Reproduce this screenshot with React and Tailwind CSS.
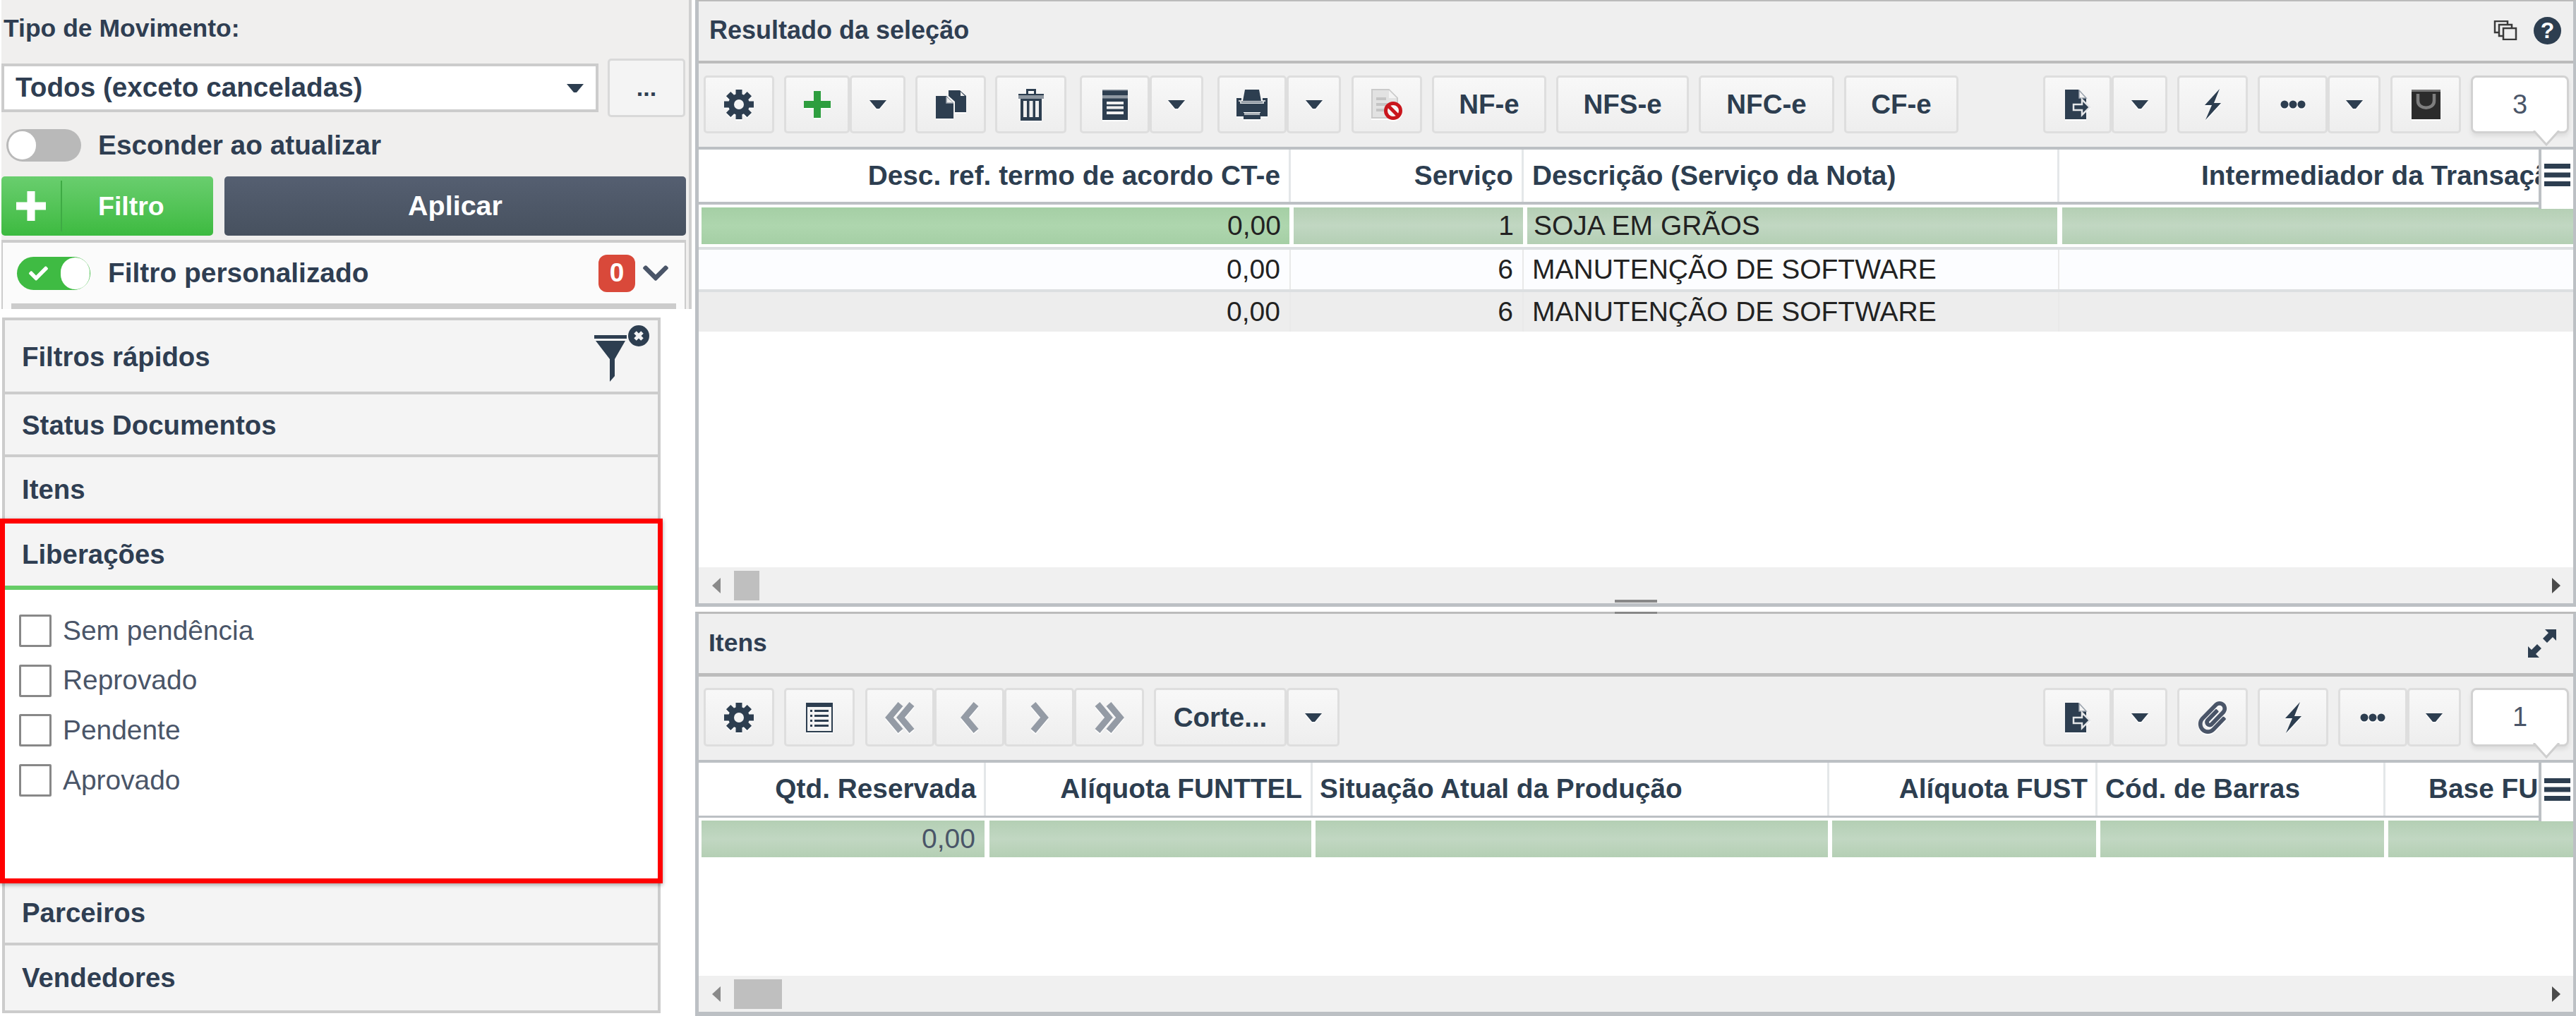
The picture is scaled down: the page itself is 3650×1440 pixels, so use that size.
import { FaPaperclip, FaCheck, FaChevronDown } from "react-icons/fa";

const DARK = "#2d3e50";

const Caret = ({ color = DARK }) => (
  <svg width="24" height="12" viewBox="0 0 24 12">
    <polygon points="0,0 24,0 14,12 10,12" fill={color} />
  </svg>
);

const Gear = () => (
  <svg width="42" height="42" viewBox="0 0 42 42">
    {[0, 45, 90, 135, 180, 225, 270, 315].map((deg) => (
      <rect key={deg} x="16.5" y="0" width="9" height="10" fill={DARK} transform={`rotate(${deg} 21 21)`} />
    ))}
    <circle cx="21" cy="21" r="15" fill={DARK} />
    <circle cx="21" cy="21" r="7" fill="#f4f4f4" />
  </svg>
);

const Plus = ({ size = 38, color = "#2e9e3f" }) => (
  <svg width={size} height={size} viewBox="0 0 38 38">
    <path d="M14 0h10v14h14v10H24v14H14V24H0V14h14z" fill={color} />
  </svg>
);

const CopyIcon = () => (
  <svg width="43" height="40" viewBox="0 0 43 40">
    <path d="M18 0h16l9 8v23H27V16l-9-8z" fill={DARK} />
    <path d="M35 2v6h6z" fill="#eeeeee" />
    <path d="M0 8h15l10 10v22H0z" fill={DARK} />
    <path d="M15 9v9h10" fill="#eeeeee" stroke="#9aa3ad" strokeWidth="1.5" />
  </svg>
);

const TrashIcon = () => (
  <svg width="36" height="45" viewBox="0 0 36 45">
    <path d="M11 7V0h14v7h-3V3h-8v4z" fill={DARK} />
    <rect x="0" y="7" width="36" height="2" fill={DARK} />
    <rect x="0" y="9" width="36" height="5" fill="#8d96a0" />
    <path d="M3 14h30v31H3z" fill={DARK} />
    <path d="M7 17h5v23H7zM15.5 17h5v23h-5zM24 17h5v23h-5z" fill="#eeeeee" />
  </svg>
);

const ListIcon = () => (
  <svg width="36" height="43" viewBox="0 0 36 43">
    <rect x="0" y="1" width="36" height="42" fill={DARK} />
    <path d="M0 0h36v1.5H0z" fill="#8d96a0" />
    <path d="M0 8h36v4.5H0z" fill="#8f98a2" />
    <path d="M6 17h24v4H6zM6 23.5h24v4H6zM6 31h24v4H6z" fill="#f0f0f0" />
  </svg>
);

const PrintIcon = () => (
  <svg width="44" height="42" viewBox="0 0 44 42">
    <path d="M12 0h20l3 16H9z" fill={DARK} />
    <path d="M0 12h7v5h30v-5h7v26H34v-6H10v6H0z" fill={DARK} />
    <path d="M3 15h4v3h30v-3h4v2h-2v3H5v-3H3z" fill="#cfd3d7" />
    <path d="M10 33h24v9H10z" fill={DARK} />
    <path d="M11 33h22v3H11z" fill="#aab0b7" />
  </svg>
);

const SheetIcon = () => (
  <svg width="38" height="42" viewBox="0 0 38 42">
    <rect x="0" y="0" width="38" height="42" fill={DARK} />
    <rect x="2" y="6" width="34" height="34" fill="#f3f3f3" />
    <path d="M6 10h3v3H6zM12 10h20v3H12zM6 17h3v3H6zM12 17h20v3H12zM6 24h3v3H6zM12 24h20v3H12zM6 31h3v3H6zM12 31h20v3H12z" fill={DARK} />
  </svg>
);

const NoDocIcon = () => (
  <svg width="44" height="44" viewBox="0 0 44 44">
    <path d="M1 1h24l12 12v28H1z" fill="#e2e2e2" stroke="#cacaca" strokeWidth="2" />
    <path d="M25 2v11h11z" fill="#f3f3f3" />
    <path d="M7 12h14v4H7zM7 20h16v4H7zM7 28h12v4H7z" fill="#c4c4c4" />
    <circle cx="31" cy="31" r="10.5" fill="#f6f6f6" stroke="#c9161d" strokeWidth="5" />
    <path d="M24 24l14 14" stroke="#c9161d" strokeWidth="5" />
  </svg>
);

const ExportIcon = () => (
  <svg width="36" height="42" viewBox="0 0 36 42">
    <path d="M0 0h19l11 12v30H0z" fill={DARK} />
    <path d="M20 1v11h10z" fill="#f3f3f3" stroke="#9aa3ad" strokeWidth="1.5" />
    <path d="M12 21h12v-7l11 11-11 11v-7H12z" fill={DARK} stroke="#e4e6e8" strokeWidth="2.5" />
  </svg>
);

const BoltIcon = () => (
  <svg width="23" height="44" viewBox="0 0 23 44">
    <path d="M21 0L0 23h10L1 44l22-24H13z" fill={DARK} />
  </svg>
);

const Dots = () => (
  <svg width="36" height="12" viewBox="0 0 36 12">
    <circle cx="6" cy="6" r="5.5" fill={DARK} />
    <circle cx="18" cy="6" r="5.5" fill={DARK} />
    <circle cx="30" cy="6" r="5.5" fill={DARK} />
  </svg>
);

const BagIcon = () => (
  <svg width="41" height="42" viewBox="0 0 41 42">
    <rect width="41" height="42" fill="#2b2b2b" />
    <rect y="0" width="41" height="3" fill="#777777" />
    <path d="M9 6v10c0 13 23 13 23 0V6" fill="none" stroke="#7e7e7e" strokeWidth="4.5" />
  </svg>
);

const Chevrons = ({ flip, double }) => (
  <svg width={double ? 42 : 26} height="44" viewBox={double ? "0 0 42 44" : "0 0 26 44"} className={flip ? "-scale-x-100" : ""}>
    <path d="M22 3L6 22l16 19" fill="none" stroke="#949ba5" strokeWidth="9" />
    {double && <path d="M38 3L22 22l16 19" fill="none" stroke="#949ba5" strokeWidth="9" />}
  </svg>
);

const Hamburger = () => (
  <svg width="37" height="32" viewBox="0 0 37 32">
    <path d="M0 0h37v7H0zM0 12.5h37v7H0zM0 25h37v7H0z" fill={DARK} />
  </svg>
);

const Btn = ({ className, children }) => (
  <div className={`flex items-center justify-center h-full shrink-0 border-[3px] border-[#dedede] rounded-[5px] bg-linear-to-b from-[#f8f8f8] to-[#eeeeee] font-bold text-[38.5px] text-[#2d3e50] [&>svg]:drop-shadow-[0_2px_0_#ffffff] ${className}`}>
    {children}
  </div>
);

const CountBox = ({ value }) => (
  <div className="relative ml-[14px] w-[139px] h-full shrink-0 flex items-center justify-center bg-white border-[3px] border-[#d2d2d2] rounded-[8px] text-[38px] text-[#4a5568] shadow-[0_4px_6px_rgba(0,0,0,0.08)]">
    {value}
    <svg className="absolute left-[85px] top-[75px]" width="38" height="22" viewBox="0 0 38 22">
      <polygon points="1,0 37,0 19,20" fill="#ffffff" />
      <path d="M1 0l18 20L37 0" fill="none" stroke="#cfcfcf" strokeWidth="3" />
    </svg>
  </div>
);

const MenuOverlay = ({ className }) => (
  <div className={`absolute right-0 top-0 w-[49px] border-l-[4px] border-[#bcc0c4] bg-white flex justify-center ${className}`}>
    <Hamburger />
  </div>
);

const Scrollbar = ({ thumb }) => (
  <div className="flex items-center h-[51px] shrink-0 bg-[#f0f0f0] pl-[19px] pr-[18px]">
    <svg width="12" height="22" viewBox="0 0 12 22"><polygon points="12,0 12,22 0,11" fill="#8a8a8a" /></svg>
    <div className={`ml-[19px] h-[42px] bg-[#bfbfbf] ${thumb}`} />
    <svg className="ml-auto" width="12" height="22" viewBox="0 0 12 22"><polygon points="0,0 0,22 12,11" fill="#4a4a4a" /></svg>
  </div>
);

const Sel = ({ className, first, children }) => (
  <div className={`h-full flex items-center bg-linear-to-b ${first ? "from-[#a5cfa5] via-[#aed6ae] to-[#a5cfa5]" : "from-[#b4cfb4] via-[#c1d7c2] to-[#b4cfb4]"} ${className}`}>
    {children}
  </div>
);

const Head = ({ className, children }) => (
  <div className={`h-full flex items-center shrink-0 border-r-[3px] border-[#e4e7e9] font-bold text-[#2d3e50] whitespace-nowrap overflow-hidden ${className}`}>
    {children}
  </div>
);

const Sec = ({ className, children }) => (
  <div className={`flex items-center pl-[24px] bg-[#f4f4f4] font-bold text-[38.4px] text-[#2f3e52] ${className}`}>
    {children}
  </div>
);

const checks = ["Sem pendência", "Reprovado", "Pendente", "Aprovado"];

const Sidebar = () => (
  <div className="w-[985px] shrink-0 h-full flex flex-col pl-[2px] bg-white overflow-hidden">
    <div className="w-[978px] h-[438px] shrink-0 bg-[#f0efee] border-r-[4px] border-[#cfcfcf]">
      <div className="h-[83px] pt-[20px] pl-[3px] font-bold text-[35.5px] leading-[40px] text-[#2f3e52]">Tipo de Movimento:</div>
      <div className="flex h-[83px] items-center">
        <div className="w-[846px] h-[69px] flex items-center bg-white border-[4px] border-[#cccccc] pl-[16px] pr-[17px] font-bold text-[38.7px] text-[#2f3e52]">
          Todos (exceto canceladas)
          <span className="ml-auto flex"><Caret /></span>
        </div>
        <div className="ml-[13px] w-[110px] h-full flex items-center justify-center border-[3px] border-[#d9d9d9] rounded-[5px] bg-[#f4f4f4] font-bold text-[34px] text-[#2f3e52]">...</div>
      </div>
      <div className="mt-[17px] h-[46px] flex items-center pl-[7px]">
        <div className="w-[106px] h-[46px] rounded-full bg-[#b9b9b9] flex items-center pl-[3px]">
          <div className="w-[39px] h-[40px] rounded-full bg-white" />
        </div>
        <span className="ml-[24px] font-bold text-[38.8px] text-[#2f3e52]">Esconder ao atualizar</span>
      </div>
      <div className="mt-[21px] h-[84px] flex">
        <div className="w-[300px] h-full flex items-center rounded-[5px] bg-linear-to-b from-[#69ce6e] to-[#3cba3f] text-white">
          <div className="w-[86px] h-[72px] flex items-center justify-center border-r-[2px] border-[#3eaa44]">
            <Plus size={42} color="#ffffff" />
          </div>
          <span className="ml-[51px] font-bold text-[37.5px]">Filtro</span>
        </div>
        <div className="ml-[16px] w-[654px] h-full flex items-center justify-center rounded-[5px] bg-linear-to-b from-[#555f71] to-[#47515f] text-white font-bold text-[39.5px]">
          Aplicar
        </div>
      </div>
      <div className="mt-[6px] w-[970px] h-[98px] flex flex-col bg-[#fbfbfb] border-t-[4px] border-x-[2px] border-[#cccccc]">
        <div className="flex-1 flex items-center pl-[20px] pr-[20px]">
          <div className="w-[104px] h-[47px] rounded-full bg-[#3fbb43] flex items-center justify-between pl-[17px] pr-[1px] text-white">
            <FaCheck size={27} />
            <div className="w-[41px] h-[45px] rounded-full bg-white" />
          </div>
          <span className="ml-[25px] font-bold text-[38.9px] text-[#2f3e52]">Filtro personalizado</span>
          <div className="ml-auto w-[52px] h-[53px] flex items-center justify-center rounded-[12px] bg-[#d9493a] text-white font-bold text-[37px]">0</div>
          <FaChevronDown className="ml-[8px]" size={42} color="#4a5568" />
        </div>
        <div className="h-[8px] mx-[12px] bg-[#cccccc]" />
      </div>
    </div>

    <div className="mt-[12px] ml-[1px] w-[933px] border-[4px] border-[#cccccc] flex flex-col">
      <Sec className="h-[105px] border-b-[4px] border-[#cccccc] pt-[2px]">
        Filtros rápidos
        <svg className="ml-auto mr-[12px] self-start mt-[5px]" width="78" height="80" viewBox="0 0 78 80">
          <path d="M0 14h46v5H0z" fill={DARK} />
          <path d="M2 22h42L29 48v24l-7 8V48z" fill={DARK} />
          <circle cx="63" cy="15" r="15" fill={DARK} />
          <path d="M58 10l10 10M68 10L58 20" stroke="#f4f4f4" strokeWidth="5" />
        </svg>
      </Sec>
      <Sec className="h-[89px] border-b-[4px] border-[#cccccc] pt-[3px]">Status Documentos</Sec>
      <Sec className="h-[87px] pt-[4px]">Itens</Sec>
      <div className="-mx-[7px] h-[517px] shrink-0 flex flex-col border-[7px] border-[#ff0000] bg-white shadow-[0_2px_6px_rgba(0,0,0,0.35)] relative">
        <Sec className="h-[88px] shrink-0">Liberações</Sec>
        <div className="h-[6px] shrink-0 bg-[#66cc66]" />
        <div className="flex flex-col gap-[24.6px] pt-[35px] pl-[20px]">
          {checks.map((label) => (
            <div key={label} className="flex items-center h-[46px]">
              <div className="w-[46px] h-[46px] border-[3px] border-[#888888] rounded-[2px] bg-white" />
              <span className="ml-[16px] text-[38.9px] text-[#4a5568]">{label}</span>
            </div>
          ))}
        </div>
      </div>
      <Sec className="h-[88px] border-b-[4px] border-[#cccccc]">Parceiros</Sec>
      <Sec className="h-[92px]">Vendedores</Sec>
    </div>
  </div>
);

const ResultPanel = () => (
  <div className="h-[860px] shrink-0 flex flex-col border-t-[2px] border-l-[5px] border-r-[4px] border-b-[5px] border-t-[#bbbbbb] border-x-[#bcc0c4] border-b-[#bcc0c4]">
    <div className="h-[84px] shrink-0 flex items-center bg-[#efefef] pl-[15px] pr-[17px] pb-[2px]">
      <span className="font-bold text-[36px] text-[#2f3e52]">Resultado da seleção</span>
      <svg className="ml-auto" width="34" height="28" viewBox="0 0 34 28">
        <rect x="2" y="1" width="18" height="16" fill="#efefef" stroke="#3a3a3a" strokeWidth="2.5" />
        <rect x="8" y="6" width="18" height="16" fill="#efefef" stroke="#3a3a3a" strokeWidth="2.5" />
        <rect x="14" y="11" width="18" height="16" fill="#efefef" stroke="#3a3a3a" strokeWidth="2.5" />
      </svg>
      <div className="ml-[23px] w-[39px] h-[39px] rounded-full bg-[#2d3e50] flex items-center justify-center text-white font-bold text-[32px]">?</div>
    </div>
    <div className="h-[4px] shrink-0 bg-[#bcbcbc]" />
    <div className="h-[118px] shrink-0 bg-[#efefef] pt-[17px] pb-[19px] pl-[7px] pr-[6px]">
      <div className="flex h-full">
        <Btn className="w-[100px]"><Gear /></Btn>
        <Btn className="ml-[14px] w-[93px]"><Plus /></Btn>
        <Btn className="w-[79px]"><Caret /></Btn>
        <Btn className="ml-[14px] w-[100px]"><CopyIcon /></Btn>
        <Btn className="ml-[13px] w-[101px]"><TrashIcon /></Btn>
        <Btn className="ml-[19px] w-[99px]"><ListIcon /></Btn>
        <Btn className="w-[76px]"><Caret /></Btn>
        <Btn className="ml-[20px] w-[98px]"><PrintIcon /></Btn>
        <Btn className="w-[77px]"><Caret /></Btn>
        <Btn className="ml-[15px] w-[100px]"><NoDocIcon /></Btn>
        <Btn className="ml-[14px] w-[162px]">NF-e</Btn>
        <Btn className="ml-[14px] w-[188px]">NFS-e</Btn>
        <Btn className="ml-[14px] w-[192px]">NFC-e</Btn>
        <Btn className="ml-[14px] w-[162px]">CF-e</Btn>
        <Btn className="ml-auto w-[97px]"><ExportIcon /></Btn>
        <Btn className="w-[79px]"><Caret /></Btn>
        <Btn className="ml-[14px] w-[100px]"><BoltIcon /></Btn>
        <Btn className="ml-[14px] w-[99px]"><Dots /></Btn>
        <Btn className="w-[75px]"><Caret /></Btn>
        <Btn className="ml-[14px] w-[100px]"><BagIcon /></Btn>
        <CountBox value="3" />
      </div>
    </div>
    <div className="h-[4px] shrink-0 bg-[#bcc0c4]" />
    <div className="relative flex-1 flex flex-col bg-white overflow-hidden">
      <div className="h-[74px] shrink-0 flex text-[38.8px]">
        <Head className="w-[839px] justify-end pr-[12px]">Desc. ref. termo de acordo CT-e</Head>
        <Head className="w-[330px] justify-end pr-[12px]">Serviço</Head>
        <Head className="w-[759px] pl-[12px]">Descrição (Serviço da Nota)</Head>
        <Head className="flex-1 border-r-0 pl-[201px]">Intermediador da Transação</Head>
      </div>
      <div className="h-[4px] shrink-0 bg-[#bcc0c4]" />
      <div className="h-[4px] shrink-0" />
      <div className="h-[52px] shrink-0 flex pl-[4px] text-[39px] text-[#222222]">
        <Sel first className="w-[833px] justify-end pr-[12px]">0,00</Sel>
        <Sel className="ml-[6px] w-[325px] justify-end pr-[13px]">1</Sel>
        <Sel className="ml-[6px] w-[751px] pl-[9px]">SOJA EM GRÃOS</Sel>
        <Sel className="ml-[7px] flex-1" />
      </div>
      <div className="h-[4px] shrink-0" />
      {[0, 1].map((i) => (
        <div key={i} className={`h-[60px] shrink-0 flex border-t-[4px] border-[#dcdfe1] text-[39px] text-[#222222] ${i ? "bg-[#ededed]" : "bg-[#fcfdff]"}`}>
          <div className="w-[839px] flex items-center justify-end pr-[13px] border-r-[2px] border-[#e9e9e9]">0,00</div>
          <div className="w-[330px] flex items-center justify-end pr-[13px] border-r-[2px] border-[#e9e9e9]">6</div>
          <div className="w-[759px] flex items-center pl-[12px] border-r-[2px] border-[#e9e9e9]">MANUTENÇÃO DE SOFTWARE</div>
        </div>
      ))}
      <div className="flex-1" />
      <Scrollbar thumb="w-[36px]" />
      <MenuOverlay className="h-[84px] pt-[20px]" />
    </div>
  </div>
);

const ItemsPanel = () => (
  <div className="mt-[7px] flex-1 flex flex-col border-t-[3px] border-l-[5px] border-r-[4px] border-b-[6px] border-t-[#bbbbbb] border-x-[#bcc0c4] border-b-[#bcc0c4] relative">
    <div className="h-[84px] shrink-0 flex items-center bg-[#efefef] pl-[14px] pr-[23px]">
      <span className="font-bold text-[35.5px] text-[#2f3e52]">Itens</span>
      <svg className="ml-auto" width="42" height="42" viewBox="0 0 42 42">
        <path d="M41 1H25l5 5-8 8 6 6 8-8 5 5zM1 41h16l-5-5 8-8-6-6-8 8-5-5z" fill={DARK} />
      </svg>
    </div>
    <div className="h-[5px] shrink-0 bg-[#bcbcbc]" />
    <div className="h-[118px] shrink-0 bg-[#efefef] pt-[16px] pb-[19px] pl-[7px] pr-[6px]">
      <div className="flex h-full">
        <Btn className="w-[100px]"><Gear /></Btn>
        <Btn className="ml-[14px] w-[100px]"><SheetIcon /></Btn>
        <Btn className="ml-[15px] w-[98px]"><Chevrons double /></Btn>
        <Btn className="w-[99px]"><Chevrons /></Btn>
        <Btn className="w-[99px]"><Chevrons flip /></Btn>
        <Btn className="w-[99px]"><Chevrons flip double /></Btn>
        <Btn className="ml-[14px] w-[188px]">Corte...</Btn>
        <Btn className="w-[75px]"><Caret /></Btn>
        <Btn className="ml-auto w-[97px]"><ExportIcon /></Btn>
        <Btn className="w-[79px]"><Caret /></Btn>
        <Btn className="ml-[14px] w-[100px]"><FaPaperclip size={46} color="#4a5568" /></Btn>
        <Btn className="ml-[14px] w-[100px]"><BoltIcon /></Btn>
        <Btn className="ml-[14px] w-[98px]"><Dots /></Btn>
        <Btn className="w-[76px]"><Caret /></Btn>
        <CountBox value="1" />
      </div>
    </div>
    <div className="h-[4px] shrink-0 bg-[#bcc0c4]" />
    <div className="relative flex-1 flex flex-col bg-white overflow-hidden">
      <div className="h-[75px] shrink-0 flex text-[38.8px]">
        <Head className="w-[407px] justify-end pr-[11px]">Qtd. Reservada</Head>
        <Head className="w-[463px] justify-end pr-[12px]">Alíquota FUNTTEL</Head>
        <Head className="w-[732px] pl-[10px]">Situação Atual da Produção</Head>
        <Head className="w-[380px] justify-end pr-[11px]">Alíquota FUST</Head>
        <Head className="w-[408px] pl-[11px]">Cód. de Barras</Head>
        <Head className="flex-1 border-r-0 pl-[61px]">Base FUST</Head>
      </div>
      <div className="h-[3px] shrink-0 bg-[#bcc0c4]" />
      <div className="h-[4px] shrink-0" />
      <div className="h-[52px] shrink-0 flex pl-[4px] text-[39px] text-[#4a5568]">
        <Sel className="w-[401px] justify-end pr-[13px]">0,00</Sel>
        <Sel className="ml-[7px] w-[456px]" />
        <Sel className="ml-[6px] w-[726px]" />
        <Sel className="ml-[6px] w-[374px]" />
        <Sel className="ml-[6px] w-[402px]" />
        <Sel className="ml-[6px] flex-1" />
      </div>
      <div className="flex-1" />
      <Scrollbar thumb="w-[68px]" />
      <MenuOverlay className="h-[83px] pt-[22px]" />
    </div>
    <div className="absolute left-[1298px] -top-[3px] w-[60px] h-[3px] bg-[#888888]" />
    <div className="absolute left-[1298px] -top-[20px] w-[60px] h-[4px] bg-[#888888]" />
  </div>
);

export default function App() {
  return (
    <div className="flex w-[3650px] h-[1440px] overflow-hidden bg-white font-['Liberation_Sans',Arial,sans-serif]">
      <Sidebar />
      <div className="flex-1 flex flex-col h-full min-w-0">
        <ResultPanel />
        <ItemsPanel />
      </div>
    </div>
  );
}
